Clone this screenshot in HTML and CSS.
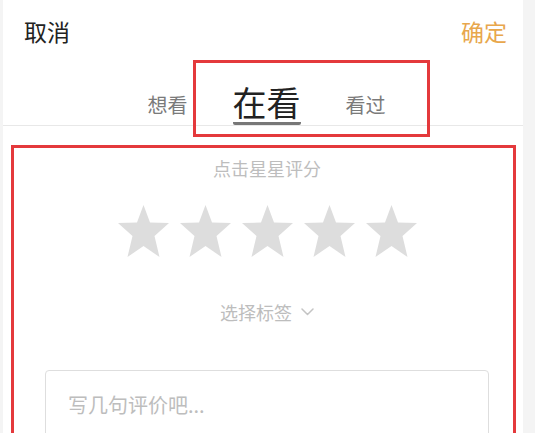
FILE: index.html
```html
<!DOCTYPE html>
<html lang="zh-CN">
<head>
    <meta charset="UTF-8">
    <meta name="viewport" content="width=device-width, initial-scale=1.0">
    <title>评价</title>
    <link rel="stylesheet" href="styles.css">
</head>
<body>
    <div class="page">
        <div class="top-bar">
            <span class="cancel-btn">取消</span>
            <span class="ok-btn">确定</span>
        </div>

        <div class="tabs">
            <span class="tab">想看</span>
            <span class="tab tab-active">在看</span>
            <span class="tab">看过</span>
        </div>

        <div class="rate-panel">
            <div class="rate-hint">点击星星评分</div>
            <div class="stars">
                <svg class="star" viewBox="0 0 51 52"><polygon points="25.5,0 32,17.5 51,18 36.5,31 41.5,52 25.5,41 9.5,52 14.5,31 0,18 19,17.5"/></svg>
                <svg class="star" viewBox="0 0 51 52"><polygon points="25.5,0 32,17.5 51,18 36.5,31 41.5,52 25.5,41 9.5,52 14.5,31 0,18 19,17.5"/></svg>
                <svg class="star" viewBox="0 0 51 52"><polygon points="25.5,0 32,17.5 51,18 36.5,31 41.5,52 25.5,41 9.5,52 14.5,31 0,18 19,17.5"/></svg>
                <svg class="star" viewBox="0 0 51 52"><polygon points="25.5,0 32,17.5 51,18 36.5,31 41.5,52 25.5,41 9.5,52 14.5,31 0,18 19,17.5"/></svg>
                <svg class="star" viewBox="0 0 51 52"><polygon points="25.5,0 32,17.5 51,18 36.5,31 41.5,52 25.5,41 9.5,52 14.5,31 0,18 19,17.5"/></svg>
            </div>
            <div class="tag-picker">
                <span>选择标签</span>
                <svg width="13" height="8" viewBox="0 0 13 8" fill="none" stroke="#c4c4c4" stroke-width="1.5" stroke-linecap="round" stroke-linejoin="round"><polyline points="1,1 6.5,6.5 12,1"/></svg>
            </div>
            <div class="comment-box">
                <span class="placeholder">写几句评价吧...</span>
            </div>
        </div>
    </div>

    <!-- annotation boxes -->
    <div class="mark mark-tabs"></div>
    <div class="mark mark-panel"></div>
</body>
</html>
```

FILE: styles.css
```css
body {
    margin: 0;
    padding: 0;
    height: 433px;
    overflow: hidden;
    background: #f4f4f4;
    font-family: "Noto Sans CJK SC", "Noto Sans", sans-serif;
    position: relative;
}

    .page {
        margin-left: 3px;
        width: 520px;
        height: 433px;
        background: #fff;
        overflow: hidden;
    }
    .top-bar {
        height: 62px;
        display: flex;
        justify-content: space-between;
        align-items: center;
        padding: 0 16px 0 21px;
        font-size: 23px;
    }
    .cancel-btn {
        color: #222;
    }
    .ok-btn {
        color: #e8a74c;
    }
    .tabs {
        display: flex;
        justify-content: center;
        align-items: flex-end;
        gap: 45px;
        padding-left: 7px;
        border-bottom: 1px solid #e8e8e8;
        box-sizing: border-box;
        height: 64px;
    }
    .tab {
        font-size: 20px;
        line-height: 20px;
        color: #7a7a7a;
        margin-bottom: 10px;
    }
    .tab-active {
        font-size: 34px;
        line-height: 36px;
        color: #222;
        margin-bottom: 0;
        padding-bottom: 2px;
        border-bottom: 3px solid #777;
        border-radius: 0 0 2px 2px;
    }
    .rate-panel {
        display: flex;
        flex-direction: column;
        align-items: center;
        padding: 30px 34px 0 42px;
    }
    .rate-hint {
        font-size: 18px;
        line-height: 24px;
        color: #bdbdbd;
    }
    .stars {
        display: flex;
        gap: 11px;
        margin-top: 25px;
    }
    .star {
        width: 51px;
        height: 52px;
        fill: #dddddd;
    }
    .tag-picker {
        margin-top: 43px;
        display: flex;
        align-items: center;
        gap: 9px;
        font-size: 18px;
        line-height: 24px;
        color: #bdbdbd;
    }
    .comment-box {
        margin-top: 46px;
        align-self: stretch;
        height: 120px;
        border: 1px solid #dedede;
        border-radius: 4px;
        padding: 22px 22px;
    }
    .placeholder {
        font-size: 20px;
        line-height: 24px;
        color: #bdbdbd;
    }
    .mark {
        position: absolute;
        border: 3px solid #e4393c;
        box-sizing: border-box;
        pointer-events: none;
    }
    .mark-tabs {
        left: 193px;
        top: 60px;
        width: 237px;
        height: 77px;
    }
    .mark-panel {
        left: 11px;
        top: 145px;
        width: 505px;
        height: 300px;
    }
```
